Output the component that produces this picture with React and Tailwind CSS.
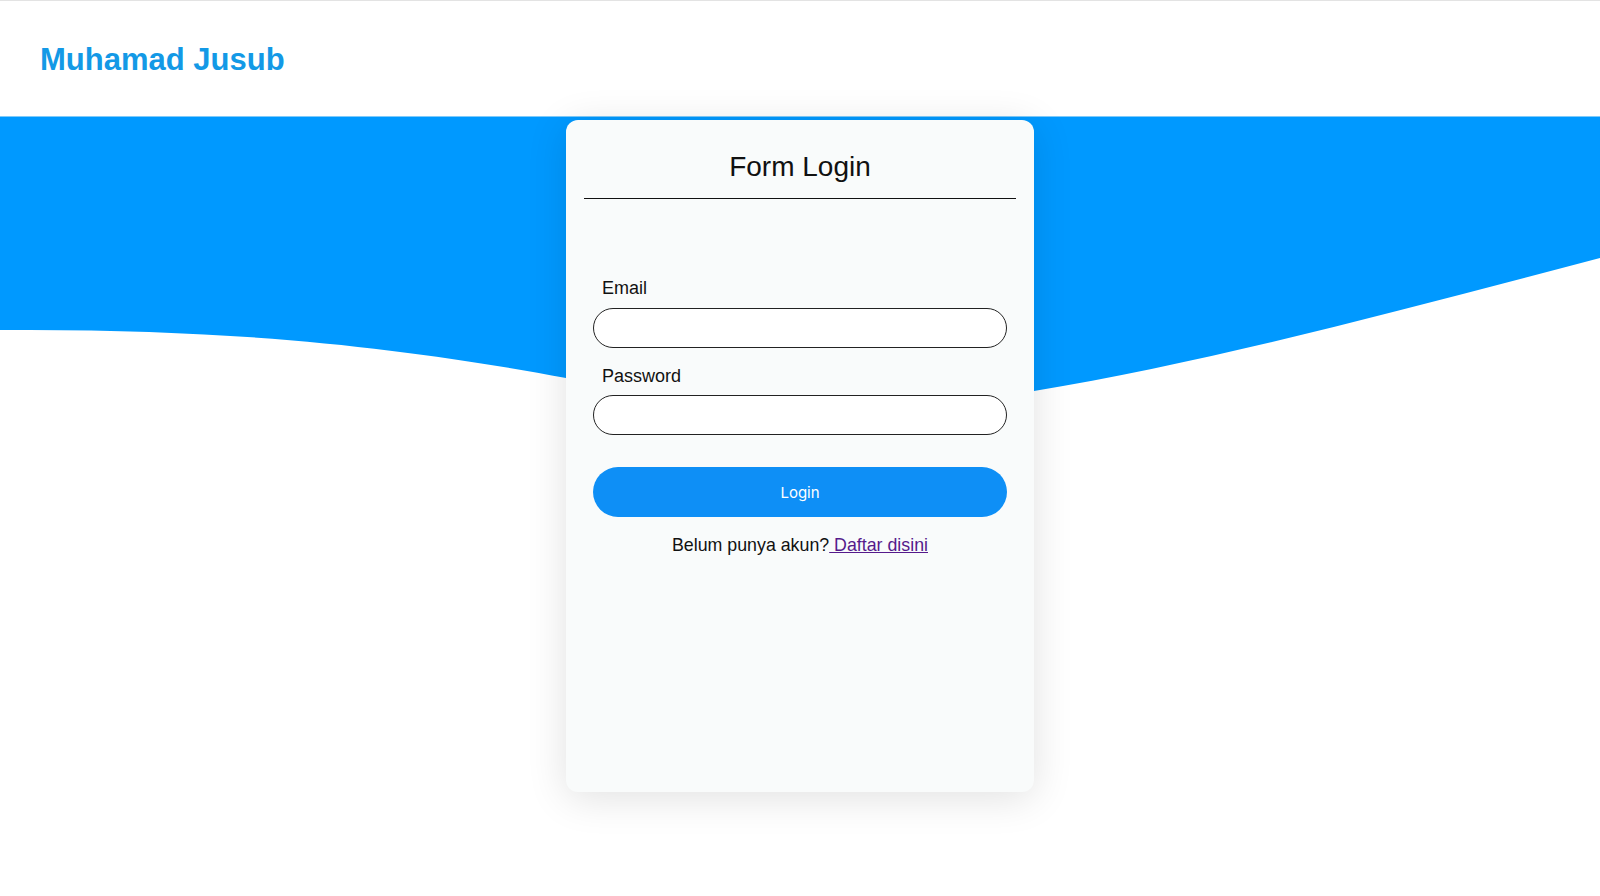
import React from 'react';

// blue wave band behind the login card
function Wave() {
  return (
    <svg
      className="block w-full h-[300px] col-start-1 row-start-1"
      viewBox="0 0 1600 300"
      preserveAspectRatio="none"
    >
      <path
        fill="#0099ff"
        d="M0,213 C250,211 420,234 566,261 C700,284 884,299 1034,274 C1214,244 1410,191 1600,141 L1600,0 L0,0 Z"
      />
    </svg>
  );
}

function LoginCard() {
  return (
    <div className="col-start-1 row-start-1 justify-self-center mt-[3px] w-[468px] h-[672px] rounded-[12px] bg-[#f9fbfb] shadow-[0_6px_40px_rgba(0,0,0,0.12)] flex flex-col pt-[31px]">
      {/* Title */}
      <div className="px-[18px]">
        <h2 className="text-center text-[28px] leading-[32px] text-[#111] pb-[15px] border-b border-[#111]">
          Form Login
        </h2>
      </div>

      {/* Form */}
      <form className="px-[27px] mt-[78px] flex flex-col" onSubmit={(e) => e.preventDefault()}>
        <label className="block pl-[9px] text-[18px] leading-[22px] text-[#111]">Email</label>
        <input
          type="email"
          className="mt-[9px] h-[40px] w-full rounded-full border border-[#222] bg-white px-4 outline-none"
        />

        <label className="block pl-[9px] mt-[17px] text-[18px] leading-[22px] text-[#111]">Password</label>
        <input
          type="password"
          className="mt-[8px] h-[40px] w-full rounded-full border border-[#222] bg-white px-4 outline-none"
        />

        <button
          type="submit"
          className="mt-[32px] h-[50px] w-full rounded-full bg-[#0e8ff6] pt-[3px] text-white text-[15px] font-['Inter',sans-serif]"
        >
          Login
        </button>

        <p className="mt-[17px] text-center text-[17.8px] leading-[22px] text-[#111]">
          Belum punya akun?
          <a href="#" className="text-[#551a8b] underline"> Daftar disini</a>
        </p>
      </form>
    </div>
  );
}

export default function App() {
  return (
    <div className="min-h-screen bg-white border-t border-[#e3e3e3] font-['Liberation_Sans',Arial,sans-serif] overflow-hidden">
      {/* Header */}
      <header className="h-[116px] pt-[41px] pl-10 border-b border-[#7fcaf9]">
        <h1 className="text-[31px] leading-[36px] font-bold text-[#1399e6]">Muhamad Jusub</h1>
      </header>

      {/* Wave + card */}
      <main className="grid">
        <Wave />
        <LoginCard />
      </main>
    </div>
  );
}
